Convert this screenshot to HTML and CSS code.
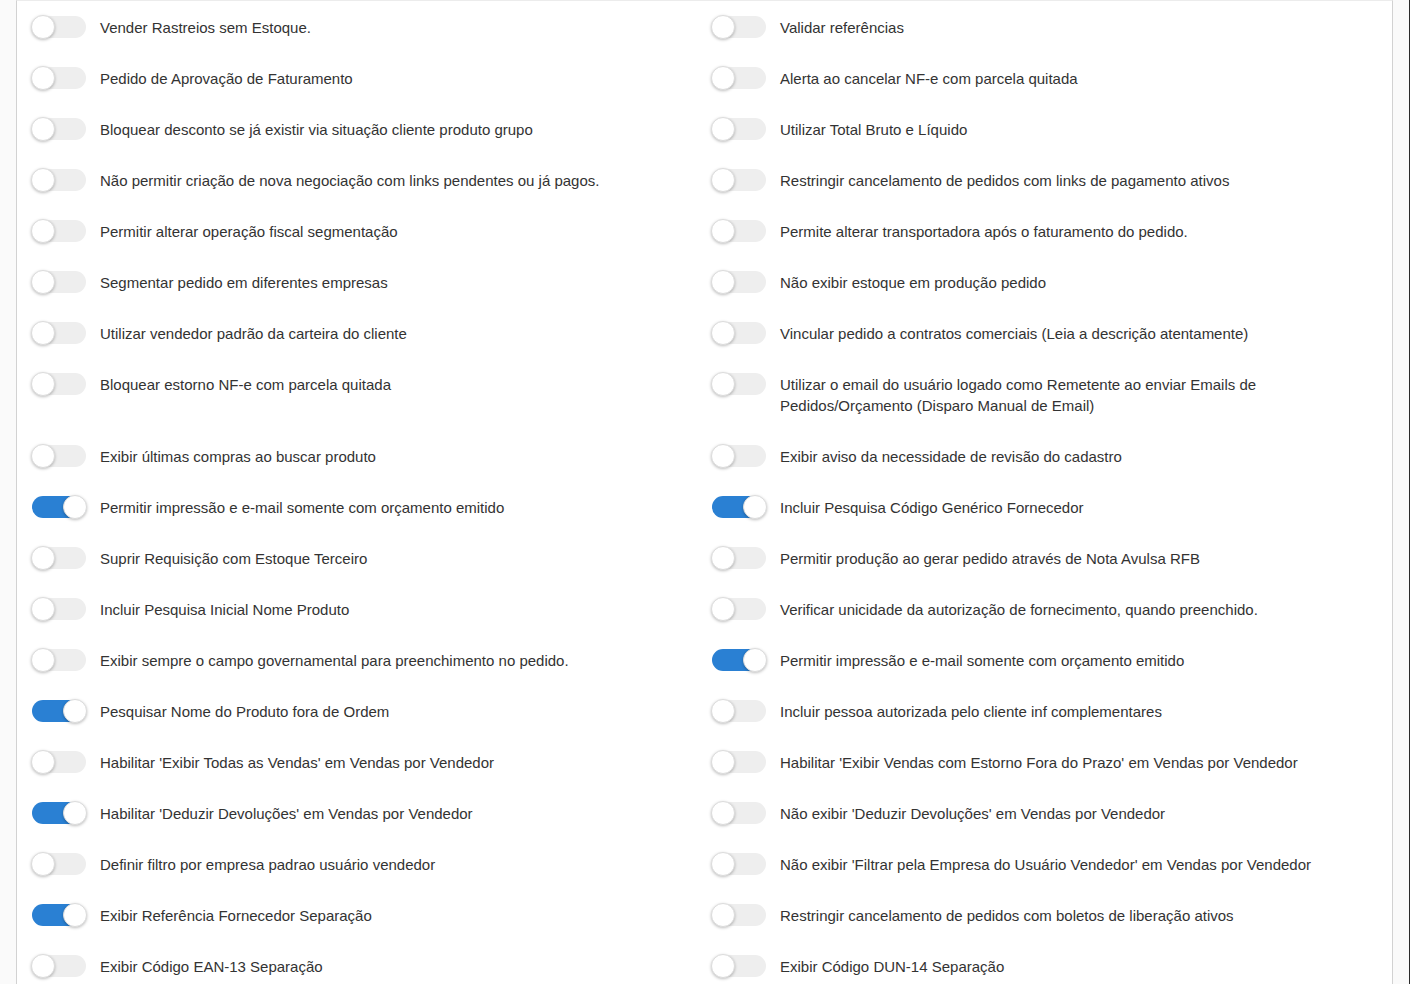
FILE: index.html
```html
<!DOCTYPE html>
<html lang="pt-BR">
<head>
  <meta charset="UTF-8" />
  <meta name="viewport" content="width=device-width, initial-scale=1.0" />
  <title>Configurações de Vendas</title>
  <link rel="stylesheet" href="styles.css">
</head>
<body>
  <div class="panel">
    <div class="options">
      <label class="option"><span class="switch"><span class="knob"></span></span><span class="text">Vender Rastreios sem Estoque.</span></label>
      <label class="option"><span class="switch"><span class="knob"></span></span><span class="text">Validar referências</span></label>

      <label class="option"><span class="switch"><span class="knob"></span></span><span class="text">Pedido de Aprovação de Faturamento</span></label>
      <label class="option"><span class="switch"><span class="knob"></span></span><span class="text">Alerta ao cancelar NF-e com parcela quitada</span></label>

      <label class="option"><span class="switch"><span class="knob"></span></span><span class="text">Bloquear desconto se já existir via situação cliente produto grupo</span></label>
      <label class="option"><span class="switch"><span class="knob"></span></span><span class="text">Utilizar Total Bruto e Líquido</span></label>

      <label class="option"><span class="switch"><span class="knob"></span></span><span class="text">Não permitir criação de nova negociação com links pendentes ou já pagos.</span></label>
      <label class="option"><span class="switch"><span class="knob"></span></span><span class="text">Restringir cancelamento de pedidos com links de pagamento ativos</span></label>

      <label class="option"><span class="switch"><span class="knob"></span></span><span class="text">Permitir alterar operação fiscal segmentação</span></label>
      <label class="option"><span class="switch"><span class="knob"></span></span><span class="text">Permite alterar transportadora após o faturamento do pedido.</span></label>

      <label class="option"><span class="switch"><span class="knob"></span></span><span class="text">Segmentar pedido em diferentes empresas</span></label>
      <label class="option"><span class="switch"><span class="knob"></span></span><span class="text">Não exibir estoque em produção pedido</span></label>

      <label class="option"><span class="switch"><span class="knob"></span></span><span class="text">Utilizar vendedor padrão da carteira do cliente</span></label>
      <label class="option"><span class="switch"><span class="knob"></span></span><span class="text">Vincular pedido a contratos comerciais (Leia a descrição atentamente)</span></label>

      <label class="option"><span class="switch"><span class="knob"></span></span><span class="text">Bloquear estorno NF-e com parcela quitada</span></label>
      <label class="option"><span class="switch"><span class="knob"></span></span><span class="text">Utilizar o email do usuário logado como Remetente ao enviar Emails de Pedidos/Orçamento (Disparo Manual de Email)</span></label>

      <label class="option"><span class="switch"><span class="knob"></span></span><span class="text">Exibir últimas compras ao buscar produto</span></label>
      <label class="option"><span class="switch"><span class="knob"></span></span><span class="text">Exibir aviso da necessidade de revisão do cadastro</span></label>

      <label class="option"><span class="switch on"><span class="knob"></span></span><span class="text">Permitir impressão e e-mail somente com orçamento emitido</span></label>
      <label class="option"><span class="switch on"><span class="knob"></span></span><span class="text">Incluir Pesquisa Código Genérico Fornecedor</span></label>

      <label class="option"><span class="switch"><span class="knob"></span></span><span class="text">Suprir Requisição com Estoque Terceiro</span></label>
      <label class="option"><span class="switch"><span class="knob"></span></span><span class="text">Permitir produção ao gerar pedido através de Nota Avulsa RFB</span></label>

      <label class="option"><span class="switch"><span class="knob"></span></span><span class="text">Incluir Pesquisa Inicial Nome Produto</span></label>
      <label class="option"><span class="switch"><span class="knob"></span></span><span class="text">Verificar unicidade da autorização de fornecimento, quando preenchido.</span></label>

      <label class="option"><span class="switch"><span class="knob"></span></span><span class="text">Exibir sempre o campo governamental para preenchimento no pedido.</span></label>
      <label class="option"><span class="switch on"><span class="knob"></span></span><span class="text">Permitir impressão e e-mail somente com orçamento emitido</span></label>

      <label class="option"><span class="switch on"><span class="knob"></span></span><span class="text">Pesquisar Nome do Produto fora de Ordem</span></label>
      <label class="option"><span class="switch"><span class="knob"></span></span><span class="text">Incluir pessoa autorizada pelo cliente inf complementares</span></label>

      <label class="option"><span class="switch"><span class="knob"></span></span><span class="text">Habilitar 'Exibir Todas as Vendas' em Vendas por Vendedor</span></label>
      <label class="option"><span class="switch"><span class="knob"></span></span><span class="text">Habilitar 'Exibir Vendas com Estorno Fora do Prazo' em Vendas por Vendedor</span></label>

      <label class="option"><span class="switch on"><span class="knob"></span></span><span class="text">Habilitar 'Deduzir Devoluções' em Vendas por Vendedor</span></label>
      <label class="option"><span class="switch"><span class="knob"></span></span><span class="text">Não exibir 'Deduzir Devoluções' em Vendas por Vendedor</span></label>

      <label class="option"><span class="switch"><span class="knob"></span></span><span class="text">Definir filtro por empresa padrao usuário vendedor</span></label>
      <label class="option"><span class="switch"><span class="knob"></span></span><span class="text">Não exibir 'Filtrar pela Empresa do Usuário Vendedor' em Vendas por Vendedor</span></label>

      <label class="option"><span class="switch on"><span class="knob"></span></span><span class="text">Exibir Referência Fornecedor Separação</span></label>
      <label class="option"><span class="switch"><span class="knob"></span></span><span class="text">Restringir cancelamento de pedidos com boletos de liberação ativos</span></label>

      <label class="option"><span class="switch"><span class="knob"></span></span><span class="text">Exibir Código EAN-13 Separação</span></label>
      <label class="option"><span class="switch"><span class="knob"></span></span><span class="text">Exibir Código DUN-14 Separação</span></label>
    </div>
  </div>
</body>
</html>
```

FILE: styles.css
```css
html {
  background: #fafafa;
}

body {
  margin: 0;
  font-family: 'Liberation Sans', Arial, sans-serif;
  font-size: 15px;
  color: #333;
  border-right: 1px solid #2b2b2b;
  overflow: hidden;
}

.panel {
  width: 1361px;
  margin-left: 16px;
  background: #fff;
  border-left: 1px solid #d2d2d2;
  border-right: 1px solid #d2d2d2;
  border-top: 1px solid #ececec;
  padding: 14px 0 20px 14px;
  box-sizing: content-box;
}

.options {
  display: grid;
  grid-template-columns: 680px 1fr;
  row-gap: 27px;
}

.option {
  display: flex;
  align-items: flex-start;
  gap: 13px;
  padding-right: 60px;
  cursor: pointer;
}

.switch {
  position: relative;
  flex: none;
  width: 56px;
  height: 24px;
}

.switch::before {
  content: "";
  position: absolute;
  left: 1px;
  right: 1px;
  top: 1px;
  height: 22px;
  border-radius: 11px;
  background: #eeeeee;
}

.switch.on::before {
  background: #2a80d3;
}

.knob {
  position: absolute;
  top: 0;
  left: 0;
  width: 22px;
  height: 22px;
  border-radius: 50%;
  background: #fff;
  border: 1px solid #dcdcdc;
  box-shadow: 0 1px 3px rgba(0, 0, 0, 0.25);
}

.switch.on .knob {
  left: 32px;
}

.text {
  padding: 2px 0 1px;
  line-height: 21px;
}
```
